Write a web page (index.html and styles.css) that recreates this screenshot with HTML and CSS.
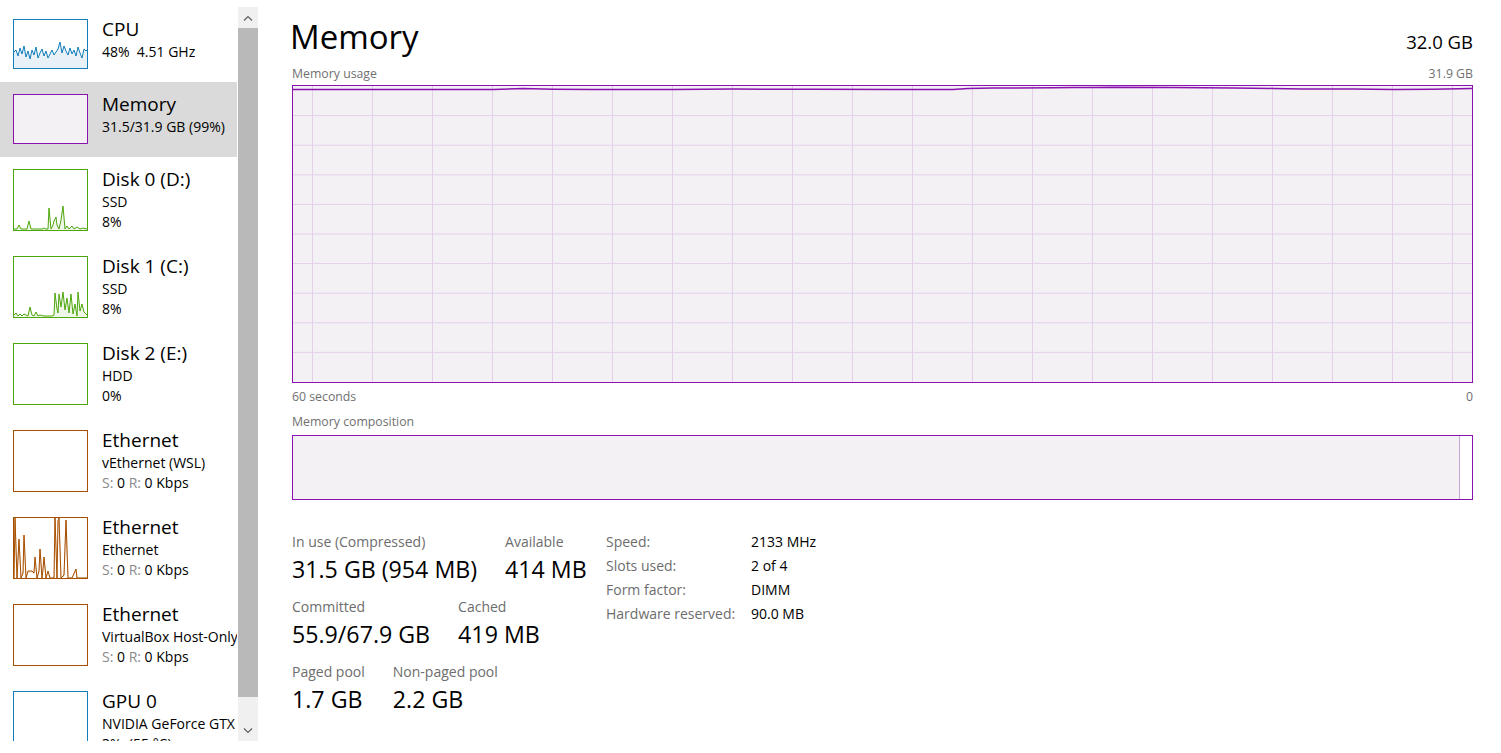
FILE: index.html
```html
<!DOCTYPE html>
<html>
<head>
  <meta charset="UTF-8">
  <title>Task Manager - Memory</title>
  <link rel="stylesheet" href="styles.css">
</head>
<body>
<div class="app">

  <div class="side">
    <div class="list">

      <div class="item">
        <div class="thumb cpu">
          <svg viewBox="0 0 73 48" preserveAspectRatio="none">
            <polygon class="fill" points="0,48 0,32 2,30 4,36 6,28 8,34 10,26 12,37 14,31 16,39 18,30 20,35 22,27 24,38 26,33 28,29 30,36 32,31 34,38 36,34 38,30 40,35 42,32 44,29 46,22 48,33 50,26 52,31 54,35 56,28 58,34 60,30 62,36 64,27 66,33 68,38 70,29 72,31 73,30 73,48"/>
            <polyline class="line" points="0,32 2,30 4,36 6,28 8,34 10,26 12,37 14,31 16,39 18,30 20,35 22,27 24,38 26,33 28,29 30,36 32,31 34,38 36,34 38,30 40,35 42,32 44,29 46,22 48,33 50,26 52,31 54,35 56,28 58,34 60,30 62,36 64,27 66,33 68,38 70,29 72,31 73,30"/>
          </svg>
        </div>
        <div class="info">
          <div class="name">CPU</div>
          <div class="sub">48%&nbsp; 4.51 GHz</div>
        </div>
      </div>

      <div class="item sel">
        <div class="thumb mem"></div>
        <div class="info">
          <div class="name">Memory</div>
          <div class="sub">31.5/31.9 GB (99%)</div>
        </div>
      </div>

      <div class="item tall">
        <div class="thumb disk">
          <svg viewBox="0 0 73 60" preserveAspectRatio="none">
            <polygon class="fill" points="0,60 0,59 3,59 5,55 7,59 13,59 15,51 17,59 28,59 30,58 32,59 34,59 35,38 37,59 39,55 40,51 42,47 43,55 45,59 47,50 49,36 51,59 53,56 55,59 58,56 60,59 63,57 66,59 69,58 73,59 73,60"/>
            <polyline class="line" points="0,59 3,59 5,55 7,59 13,59 15,51 17,59 28,59 30,58 32,59 34,59 35,38 37,59 39,55 40,51 42,47 43,55 45,59 47,50 49,36 51,59 53,56 55,59 58,56 60,59 63,57 66,59 69,58 73,59"/>
          </svg>
        </div>
        <div class="info">
          <div class="name">Disk 0 (D:)</div>
          <div class="sub">SSD</div>
          <div class="sub">8%</div>
        </div>
      </div>

      <div class="item tall">
        <div class="thumb disk">
          <svg viewBox="0 0 73 60" preserveAspectRatio="none">
            <polygon class="fill" points="0,60 0,58 2,56 4,59 6,57 8,59 10,57 12,58 14,59 16,50 18,58 20,59 22,55 24,59 26,58 30,59 38,59 40,58 41,36 43,52 44,56 45,37 47,50 49,35 51,53 53,41 55,56 57,37 59,57 61,47 63,59 64,35 66,54 68,47 70,55 73,58 73,60"/>
            <polyline class="line" points="0,58 2,56 4,59 6,57 8,59 10,57 12,58 14,59 16,50 18,58 20,59 22,55 24,59 26,58 30,59 38,59 40,58 41,36 43,52 44,56 45,37 47,50 49,35 51,53 53,41 55,56 57,37 59,57 61,47 63,59 64,35 66,54 68,47 70,55 73,58"/>
          </svg>
        </div>
        <div class="info">
          <div class="name">Disk 1 (C:)</div>
          <div class="sub">SSD</div>
          <div class="sub">8%</div>
        </div>
      </div>

      <div class="item tall">
        <div class="thumb disk"></div>
        <div class="info">
          <div class="name">Disk 2 (E:)</div>
          <div class="sub">HDD</div>
          <div class="sub">0%</div>
        </div>
      </div>

      <div class="item tall">
        <div class="thumb eth"></div>
        <div class="info">
          <div class="name">Ethernet</div>
          <div class="sub">vEthernet (WSL)</div>
          <div class="sub"><span class="dim">S:</span> 0 <span class="dim">R:</span> 0 Kbps</div>
        </div>
      </div>

      <div class="item tall">
        <div class="thumb eth">
          <svg viewBox="0 0 73 60" preserveAspectRatio="none">
            <polyline class="line dot" points="0,60 1,2 3,60 5,22 7,60 9,56 10,18 12,60 14,54 18,54 20,56 21,40 23,60 25,54 26,32 28,60 29,52 30,40 32,60 34,54 36,60 40,60 41,0 43,60 44,4 45,0 47,60 50,58 52,3 54,60 58,60 62,52 63,60 73,60"/>
            <polyline class="line" points="0,60 1,0 3,60 5,21 7,60 9,55 10,17 12,60 14,53 18,53 20,55 21,39 23,60 25,53 26,31 28,60 29,51 30,39 32,60 34,53 36,60 40,60 41,0 43,60 44,3 45,0 47,60 50,57 52,2 54,60 58,60 62,51 63,60 73,60"/>
          </svg>
        </div>
        <div class="info">
          <div class="name">Ethernet</div>
          <div class="sub">Ethernet</div>
          <div class="sub"><span class="dim">S:</span> 0 <span class="dim">R:</span> 0 Kbps</div>
        </div>
      </div>

      <div class="item tall">
        <div class="thumb eth"></div>
        <div class="info">
          <div class="name">Ethernet</div>
          <div class="sub">VirtualBox Host-Only Network</div>
          <div class="sub"><span class="dim">S:</span> 0 <span class="dim">R:</span> 0 Kbps</div>
        </div>
      </div>

      <div class="item tall">
        <div class="thumb gpu"></div>
        <div class="info">
          <div class="name">GPU 0</div>
          <div class="sub">NVIDIA GeForce GTX 1070</div>
          <div class="sub">3%&nbsp; (55 °C)</div>
        </div>
      </div>

    </div>

    <div class="scroll">
      <div class="arrow">
        <svg width="10" height="6" viewBox="0 0 10 6"><polyline points="1,5.5 5,1.5 9,5.5"/></svg>
      </div>
      <div class="track"><div class="knob"></div></div>
      <div class="arrow">
        <svg width="10" height="6" viewBox="0 0 10 6"><polyline points="1,0.5 5,4.5 9,0.5"/></svg>
      </div>
    </div>
  </div>

  <div class="main">
    <div class="head">
      <h1>Memory</h1>
      <span class="total">32.0 GB</span>
    </div>

    <div class="cap"><span>Memory usage</span><span>31.9 GB</span></div>
    <div class="graph">
      <svg width="1179" height="296" viewBox="0 0 1179 296">
        <g class="grid">
          <line x1="0" y1="29.6" x2="1179" y2="29.6"/>
          <line x1="0" y1="59.2" x2="1179" y2="59.2"/>
          <line x1="0" y1="88.8" x2="1179" y2="88.8"/>
          <line x1="0" y1="118.4" x2="1179" y2="118.4"/>
          <line x1="0" y1="148" x2="1179" y2="148"/>
          <line x1="0" y1="177.6" x2="1179" y2="177.6"/>
          <line x1="0" y1="207.2" x2="1179" y2="207.2"/>
          <line x1="0" y1="236.8" x2="1179" y2="236.8"/>
          <line x1="0" y1="266.4" x2="1179" y2="266.4"/>
          <line x1="19.5" y1="0" x2="19.5" y2="296"/>
          <line x1="79.5" y1="0" x2="79.5" y2="296"/>
          <line x1="139.5" y1="0" x2="139.5" y2="296"/>
          <line x1="199.5" y1="0" x2="199.5" y2="296"/>
          <line x1="259.5" y1="0" x2="259.5" y2="296"/>
          <line x1="319.5" y1="0" x2="319.5" y2="296"/>
          <line x1="379.5" y1="0" x2="379.5" y2="296"/>
          <line x1="439.5" y1="0" x2="439.5" y2="296"/>
          <line x1="499.5" y1="0" x2="499.5" y2="296"/>
          <line x1="559.5" y1="0" x2="559.5" y2="296"/>
          <line x1="619.5" y1="0" x2="619.5" y2="296"/>
          <line x1="679.5" y1="0" x2="679.5" y2="296"/>
          <line x1="739.5" y1="0" x2="739.5" y2="296"/>
          <line x1="799.5" y1="0" x2="799.5" y2="296"/>
          <line x1="859.5" y1="0" x2="859.5" y2="296"/>
          <line x1="919.5" y1="0" x2="919.5" y2="296"/>
          <line x1="979.5" y1="0" x2="979.5" y2="296"/>
          <line x1="1039.5" y1="0" x2="1039.5" y2="296"/>
          <line x1="1099.5" y1="0" x2="1099.5" y2="296"/>
          <line x1="1159.5" y1="0" x2="1159.5" y2="296"/>
        </g>
        <polyline class="usage" points="0,3.4 200,3.4 230,2.6 260,3.2 300,3.4 380,3.4 440,3.1 520,3.2 600,3.4 660,3.4 675,2.4 700,2.0 760,1.8 780,1.4 800,1.6 820,1.2 880,1.6 940,1.9 980,2.4 1010,3.1 1060,3.0 1100,3.4 1140,3.2 1179,2.6"/>
      </svg>
    </div>
    <div class="cap below"><span>60 seconds</span><span>0</span></div>

    <div class="cap comp-cap">Memory composition</div>
    <div class="comp">
      <div class="used"></div>
      <div class="free"></div>
    </div>

    <div class="stats">
      <div class="big">
        <div class="row">
          <div class="stat"><div class="lbl">In use (Compressed)</div><div class="val">31.5 GB (954 MB)</div></div>
          <div class="stat"><div class="lbl">Available</div><div class="val">414 MB</div></div>
        </div>
        <div class="row">
          <div class="stat"><div class="lbl">Committed</div><div class="val">55.9/67.9 GB</div></div>
          <div class="stat"><div class="lbl">Cached</div><div class="val">419 MB</div></div>
        </div>
        <div class="row">
          <div class="stat"><div class="lbl">Paged pool</div><div class="val">1.7 GB</div></div>
          <div class="stat"><div class="lbl">Non-paged pool</div><div class="val">2.2 GB</div></div>
        </div>
      </div>

      <div class="specs">
        <span class="k">Speed:</span><span>2133 MHz</span>
        <span class="k">Slots used:</span><span>2 of 4</span>
        <span class="k">Form factor:</span><span>DIMM</span>
        <span class="k">Hardware reserved:</span><span>90.0 MB</span>
      </div>
    </div>
  </div>

</div>
</body>
</html>
```

FILE: styles.css
```css
body {
  margin: 0;
  background: #fff;
  font-family: "Segoe UI", "Open Sans", sans-serif;
  color: #000;
}

.app {
  display: flex;
  height: 753px;
}

/* left list of devices */
.side {
  display: flex;
  margin-top: 7px;
  height: 734px;
}

.list {
  width: 237px;
  overflow: hidden;
}

.item {
  display: flex;
  align-items: flex-start;
  padding: 12px 0 13px 13px;
  white-space: nowrap;
}
.item.sel {
  background: #dadada;
}

.thumb {
  flex: none;
  width: 75px;
  height: 50px;
  box-sizing: border-box;
  border: 1px solid;
  background: #fff;
}
.tall .thumb {
  height: 62px;
}
.thumb svg {
  display: block;
  width: 100%;
  height: 100%;
}
.thumb .line {
  fill: none;
  stroke-width: 1;
}
.thumb.cpu { border-color: #117dbb; }
.thumb.cpu .line { stroke: #117dbb; }
.thumb.cpu .fill { fill: #e8f1f8; }
.thumb.mem { border-color: #8b12ae; background: #f3f1f4; }
.thumb.disk { border-color: #4da60c; }
.thumb.disk .line { stroke: #4da60c; }
.thumb.disk .fill { fill: #eef7e8; }
.thumb.eth { border-color: #a74f01; }
.thumb.eth .line { stroke: #a74f01; }
.thumb.eth .dot { stroke: #e0b080; stroke-dasharray: 1 1; }
.thumb.gpu { border-color: #117dbb; }

.info {
  margin: -2px 0 -3px 14px;
  overflow: hidden;
}
.name {
  font-size: 19px;
  line-height: 25px;
}
.sub {
  font-size: 14px;
  line-height: 20px;
}
.dim {
  color: #8a8a8a;
}

.scroll {
  width: 20px;
  margin-left: 1px;
  display: flex;
  flex-direction: column;
  background: #f0f0f0;
}
.arrow {
  height: 21px;
  display: flex;
  align-items: center;
  justify-content: center;
}
.arrow svg polyline {
  fill: none;
  stroke: #606060;
  stroke-width: 1.2;
}
.track {
  flex: 1;
  padding-bottom: 23px;
}
.knob {
  height: 100%;
  background: #b9b9b9;
}

/* right side */
.main {
  width: 1181px;
  margin-left: 34px;
  padding-top: 15px;
}

.head {
  display: flex;
  justify-content: space-between;
  align-items: baseline;
}
.head h1 {
  margin: 0 0 0 -2px;
  font-size: 33px;
  font-weight: normal;
  line-height: 44px;
}
.total {
  font-size: 18.5px;
}

.cap {
  display: flex;
  justify-content: space-between;
  font-size: 12.3px;
  line-height: 16px;
  color: #707070;
  margin-top: 7px;
}
.cap.below {
  margin-top: 6px;
}
.cap.comp-cap {
  margin-top: 9px;
}

.graph {
  margin-top: 3px;
  border: 1px solid #8b12ae;
  height: 296px;
  background: #f3f1f4;
}
.graph svg {
  display: block;
}
.grid line {
  stroke: #e5d0eb;
  stroke-width: 1;
}
.usage {
  fill: none;
  stroke: #8b12ae;
  stroke-width: 1.5;
}

.comp {
  margin-top: 5px;
  height: 63px;
  border: 1px solid #8b12ae;
  display: flex;
}
.comp .used {
  flex: 1;
  background: #f3f1f4;
  border-right: 1px solid #c9a6d6;
}
.comp .free {
  width: 12px;
  background: #fff;
}

.stats {
  display: flex;
  margin-top: 32px;
}
.big {
  width: 314px;
}
.row {
  display: flex;
  gap: 28px;
  margin-bottom: 12px;
}
.lbl {
  font-size: 14px;
  line-height: 19px;
  color: #6d6d6d;
}
.val {
  font-size: 23.2px;
  line-height: 32px;
  margin-top: 2px;
}

.specs {
  display: grid;
  grid-template-columns: 145px auto;
  align-content: start;
  font-size: 14px;
  line-height: 24px;
  margin-top: -2px;
}
.specs .k {
  color: #6d6d6d;
}
```
